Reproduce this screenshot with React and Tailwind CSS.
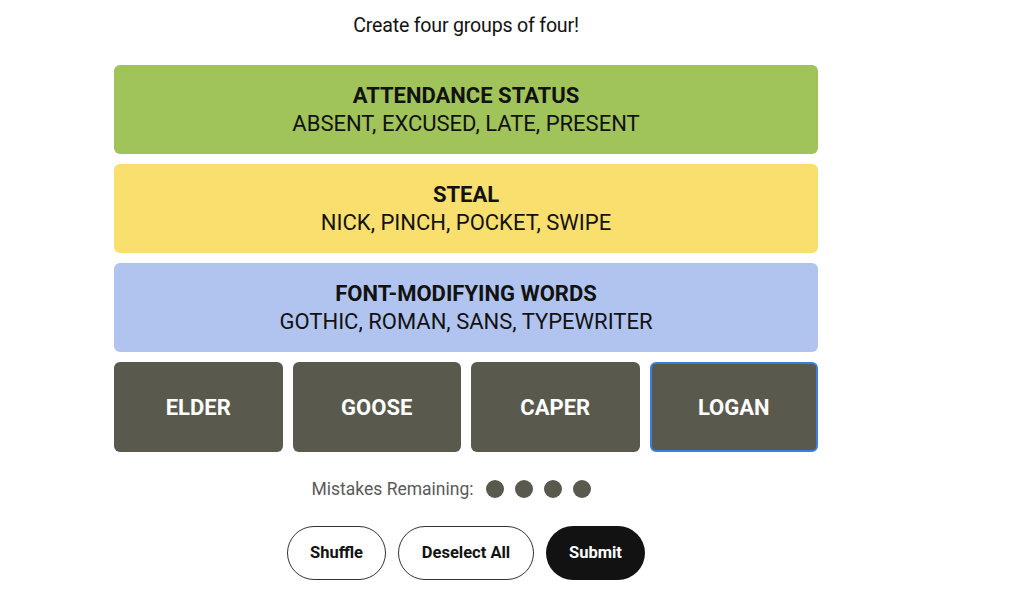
import React from "react";

const groups = [
    { title: "ATTENDANCE STATUS", words: "ABSENT, EXCUSED, LATE, PRESENT", color: "bg-[#a0c35a]" },
    { title: "STEAL", words: "NICK, PINCH, POCKET, SWIPE", color: "bg-[#f9df6d]" },
    { title: "FONT-MODIFYING WORDS", words: "GOTHIC, ROMAN, SANS, TYPEWRITER", color: "bg-[#b0c4ef]" },
];

const tiles = [
    { word: "ELDER", selected: false },
    { word: "GOOSE", selected: false },
    { word: "CAPER", selected: false },
    { word: "LOGAN", selected: true },
];

const App = () => {
    return (
        <div className="min-h-screen bg-white font-['Roboto',sans-serif] text-[#121212]">
            <div className="w-[704px] ml-[114px] pt-[14px]">
                <p className="text-center text-[19.6px] leading-6 mb-[27px] tracking-[-0.2px]">
                    Create four groups of four!
                </p>

                <div className="flex flex-col gap-[10px]">
                    {/* Solved groups */}
                    {groups.map((g) => (
                        <div
                            key={g.title}
                            className={`${g.color} h-[89px] rounded-md flex flex-col items-center justify-center`}
                        >
                            <h3 className="text-[22px] leading-[28px] font-bold">{g.title}</h3>
                            <p className="text-[22px] leading-[28px]">{g.words}</p>
                        </div>
                    ))}

                    {/* Remaining tiles */}
                    <div className="grid grid-cols-4 gap-[10px]">
                        {tiles.map((t) => (
                            <button
                                key={t.word}
                                className={`h-[90px] rounded-md bg-[#5a594e] text-white text-[22px] font-bold flex items-center justify-center ${
                                    t.selected ? "border-2 border-[#3d7de0]" : ""
                                }`}
                            >
                                {t.word}
                            </button>
                        ))}
                    </div>
                </div>

                {/* Mistakes */}
                <div className="flex items-center justify-center gap-[12px] mt-[24px] pr-[30px]">
                    <span className="text-[17.5px] text-[#5a5a5a]">Mistakes Remaining:</span>
                    <div className="flex gap-[11px]">
                        {[0, 1, 2, 3].map((i) => (
                            <span key={i} className="w-[18px] h-[18px] rounded-full bg-[#5a594e]" />
                        ))}
                    </div>
                </div>

                {/* Controls */}
                <div className="flex justify-center gap-3 mt-[24px] font-bold text-[16.5px]">
                    <button className="w-[99px] h-[54px] rounded-full border border-[#333] bg-white">Shuffle</button>
                    <button className="w-[136px] h-[54px] rounded-full border border-[#333] bg-white">Deselect All</button>
                    <button className="w-[99px] h-[54px] rounded-full bg-[#121212] text-white">Submit</button>
                </div>
            </div>
        </div>
    );
};

export default App;
